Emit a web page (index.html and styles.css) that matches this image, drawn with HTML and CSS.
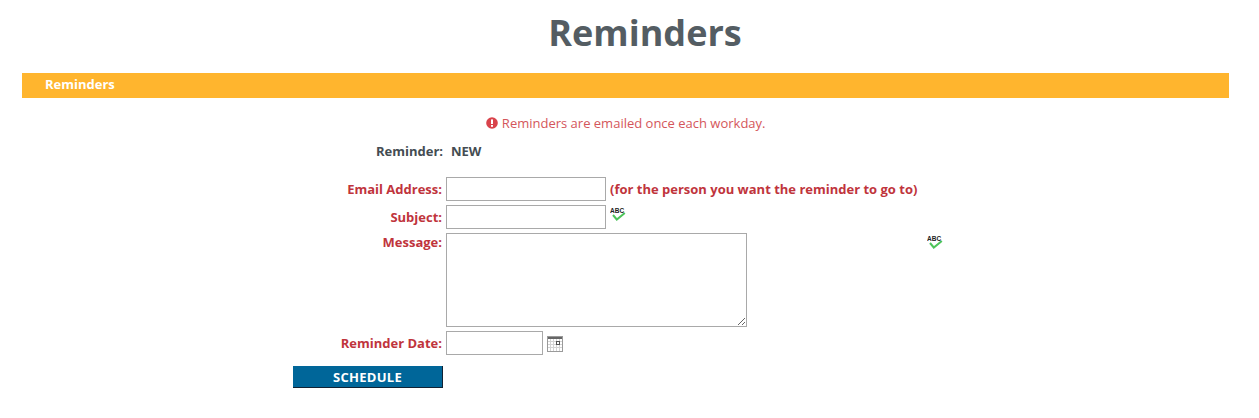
FILE: index.html
```html
<!DOCTYPE html>
<html lang="en" dir="ltr">
    <head>
        <meta charset="utf-8">
        <meta name="viewport" content="width=device-width, initial-scale=1.0">
        <link rel="stylesheet" href="styles.css">
        <title>Reminders</title>
    </head>
    <body>
        <h1 class="page-header">Reminders</h1>
        <div class="section-bar">Reminders</div>
        <p class="notice">
            <svg class="notice-icon" viewBox="0 0 12 12" width="12" height="12"><circle cx="6" cy="6" r="5.8" fill="#d9434b"/><rect x="5" y="2.4" width="2" height="4.6" fill="#fff"/><rect x="5" y="8" width="2" height="1.8" fill="#fff"/></svg>
            <span class="notice-text">Reminders are emailed once each workday.</span>
        </p>
        <form class="reminder-form">
            <div class="status-row">
                <span class="status-label">Reminder:</span>
                <span class="status-value">NEW</span>
            </div>
            <div class="row first-row">
                <label class="field-label" for="email">Email Address:</label>
                <input class="input-text" type="text" id="email">
                <b class="hint">(for the person you want the reminder to go to)</b>
            </div>
            <div class="row">
                <label class="field-label" for="subject">Subject:</label>
                <input class="input-text" type="text" id="subject">
                <svg class="spell-icon" viewBox="0 0 16 15" width="16" height="15"><path d="M3 8 L6.8 12.5 L14.8 6" fill="none" stroke="#4ec45a" stroke-width="2"/><text x="0" y="6" class="spell-text">ABC</text></svg>
            </div>
            <div class="row message-row">
                <label class="field-label message-label" for="message">Message:</label>
                <textarea class="input-message" id="message"></textarea>
                <svg class="spell-icon message-spell" viewBox="0 0 16 15" width="16" height="15"><path d="M3 8 L6.8 12.5 L14.8 6" fill="none" stroke="#4ec45a" stroke-width="2"/><text x="0" y="6" class="spell-text">ABC</text></svg>
            </div>
            <div class="row">
                <label class="field-label" for="date">Reminder Date:</label>
                <input class="input-date" type="text" id="date">
                <svg class="cal-icon" viewBox="0 0 16 16" width="16" height="16">
                    <rect x="0.5" y="0.5" width="15" height="15" fill="#fff" stroke="#9a9a9a"/>
                    <rect x="1" y="1" width="14" height="2" fill="#666"/>
                    <path d="M1 5.5H15M1 8.5H15M1 11.5H15M3.5 3V15M6.5 3V15M9.5 3V15M12.5 3V15" stroke="#d4d4d4" stroke-width="1" fill="none"/>
                    <rect x="9.5" y="5.5" width="3" height="3" fill="#fff" stroke="#555"/>
                </svg>
            </div>
            <button class="btn-schedule" type="button">SCHEDULE</button>
        </form>
    </body>
</html>
```

FILE: styles.css
```css
body {
  background-color: white;
  color: #444c52;
  font-family: "Open Sans", Arial, Helvetica, sans-serif;
  font-size: 13px;
  margin: 0;
  padding: 0 30px 0 22px;
}
.page-header {
  color: #545d63;
  font-size: 36px;
  font-weight: 700;
  line-height: 49px;
  margin: 8px 0 16px;
  padding-left: 39px;
  text-align: center;
}
.section-bar {
  background-color: #ffb52e;
  color: white;
  font-weight: 700;
  height: 25px;
  line-height: 23px;
  padding-left: 23px;
}
.notice {
  color: #d4565b;
  line-height: 18px;
  margin: 16px 0 0;
  padding-left: 1px;
  text-align: center;
}
.notice-icon {
  vertical-align: -1px;
}
.reminder-form {
  margin: 10px 0 0 271px;
}
.status-row {
  display: flex;
  font-weight: 700;
  line-height: 18px;
}
.status-label {
  margin-right: 8px;
  text-align: right;
  width: 150px;
}
.row {
  align-items: flex-start;
  display: flex;
  margin-top: 4px;
}
.first-row {
  margin-top: 17px;
}
.field-label {
  color: #c0343c;
  font-weight: 700;
  line-height: 24px;
  margin-right: 4px;
  text-align: right;
  width: 149px;
}
.message-label {
  line-height: 18px;
}
.input-text, .input-date, .input-message {
  background: white;
  border: 1px solid #a9a9a9;
  box-sizing: border-box;
  margin: 0;
  padding: 0;
}
.input-text {
  height: 24px;
  width: 160px;
}
.input-date {
  height: 24px;
  width: 97px;
}
.input-message {
  display: block;
  height: 94px;
  width: 301px;
}
.hint {
  color: #c0343c;
  line-height: 24px;
  margin-left: 4px;
}
.spell-icon {
  margin: 2px 0 0 4px;
}
.spell-text {
  fill: #222;
  font-family: "Liberation Sans", Arial, sans-serif;
  font-size: 6.5px;
  font-weight: 700;
}
.message-spell {
  margin-left: 180px;
}
.cal-icon {
  margin: 5px 0 0 4px;
}
.btn-schedule {
  background-color: #006699;
  border: 0;
  border-bottom: 1px solid #123;
  border-right: 1px solid #123;
  color: white;
  display: block;
  font-family: inherit;
  font-size: 13px;
  font-weight: 700;
  height: 22px;
  letter-spacing: 0.3px;
  margin-top: 11px;
  padding: 0;
  width: 150px;
}
```
